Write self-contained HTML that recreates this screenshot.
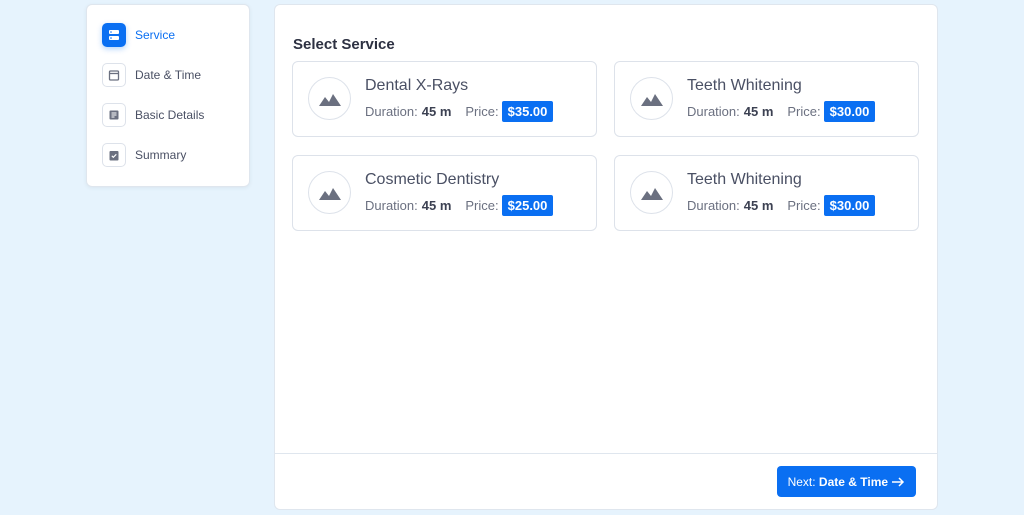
<!DOCTYPE html>
<html><head><style>
*{box-sizing:border-box;margin:0;padding:0}
body{width:1024px;height:515px;background:#e6f3fd;font-family:"Liberation Sans",sans-serif;position:relative;overflow:hidden;color:#4a5064}
.side{position:absolute;left:86px;top:4px;width:164px;height:183px;background:#fff;border:1px solid #dfe6ee;border-radius:6px;box-shadow:0 1px 4px rgba(0,0,0,.06)}
.it{position:absolute;left:15px;display:flex;align-items:center;font-size:12px;color:#4a5064}
.ic{width:24px;height:24px;border:1px solid #dde2ea;border-radius:5px;margin-right:9px;display:flex;align-items:center;justify-content:center;background:#fff}
.ic.a{background:#0a6ff2;border-color:#0a6ff2;box-shadow:0 2px 6px rgba(10,111,242,.3)}
.main{position:absolute;left:274px;top:4px;width:664px;height:506px;background:#fff;border:1px solid #dfe6ee;border-radius:6px}
h2{position:absolute;left:18px;top:31px;font-size:15px;font-weight:bold;color:#2d3142}
.card{position:absolute;width:305px;height:76px;border:1px solid #dde2ea;border-radius:6px}
.circ{position:absolute;left:15px;top:15px;width:43px;height:43px;border:1px solid #dde2ea;border-radius:50%;display:flex;align-items:center;justify-content:center}
.t{position:absolute;left:72px;top:15px;font-size:16px;color:#4a5064}
.d{position:absolute;left:72px;top:39px;font-size:13px;color:#6b7080;display:flex;align-items:center;white-space:nowrap}
.d b{color:#3c4152;margin-left:4px;margin-right:14px}
.p{background:#0a6ff2;color:#fff;font-weight:bold;padding:3px 6px;border-radius:2px;margin-left:3px}
.foot{position:absolute;left:0;top:448px;width:662px;border-top:1px solid #dfe6ee}
.btn{position:absolute;left:502px;top:461px;width:139px;height:31px;background:#0a6ff2;border-radius:4px;color:#fff;font-size:12px;display:flex;align-items:center;justify-content:center}
</style></head><body>
<div class="side">
<div class="it" style="top:18px;color:#0a6ff2"><div class="ic a"><svg width="12" height="12" viewBox="0 0 12 12"><rect x="1" y="1" width="10" height="4" rx="1" fill="#fff"/><rect x="1" y="7" width="10" height="4" rx="1" fill="#fff"/><circle cx="3" cy="3" r=".8" fill="#0a6ff2"/><circle cx="3" cy="9" r=".8" fill="#0a6ff2"/></svg></div>Service</div>
<div class="it" style="top:58px"><div class="ic"><svg width="12" height="12" viewBox="0 0 12 12"><rect x="1.5" y="2" width="9" height="9" rx="1" fill="none" stroke="#6b7080" stroke-width="1.3"/><line x1="1.5" y1="4.5" x2="10.5" y2="4.5" stroke="#6b7080" stroke-width="1.3"/></svg></div>Date &amp; Time</div>
<div class="it" style="top:98px"><div class="ic"><svg width="12" height="12" viewBox="0 0 12 12"><rect x="1.5" y="1.5" width="9" height="9" rx="1" fill="#6b7080"/><path d="M3.5 4h5M3.5 6h5M3.5 8h3" stroke="#fff" stroke-width="1"/></svg></div>Basic Details</div>
<div class="it" style="top:138px"><div class="ic"><svg width="12" height="12" viewBox="0 0 12 12"><rect x="1.5" y="2" width="9" height="9.5" rx="1" fill="#6b7080"/><path d="M3.8 6.8l1.5 1.5 3-3" stroke="#fff" stroke-width="1.1" fill="none"/></svg></div>Summary</div>
</div>
<div class="main">
<h2>Select Service</h2>
<div class="card" style="left:17px;top:56px"><div class="circ"><svg width="22" height="14" viewBox="0 0 22 14"><path d="M0 14L6 5l4 5 4-8 8 12z" fill="#6b7080"/></svg></div><div class="t">Dental X-Rays</div><div class="d">Duration:<b>45 m</b>Price:<span class="p">$35.00</span></div></div>
<div class="card" style="left:339px;top:56px"><div class="circ"><svg width="22" height="14" viewBox="0 0 22 14"><path d="M0 14L6 5l4 5 4-8 8 12z" fill="#6b7080"/></svg></div><div class="t">Teeth Whitening</div><div class="d">Duration:<b>45 m</b>Price:<span class="p">$30.00</span></div></div>
<div class="card" style="left:17px;top:150px"><div class="circ"><svg width="22" height="14" viewBox="0 0 22 14"><path d="M0 14L6 5l4 5 4-8 8 12z" fill="#6b7080"/></svg></div><div class="t">Cosmetic Dentistry</div><div class="d">Duration:<b>45 m</b>Price:<span class="p">$25.00</span></div></div>
<div class="card" style="left:339px;top:150px"><div class="circ"><svg width="22" height="14" viewBox="0 0 22 14"><path d="M0 14L6 5l4 5 4-8 8 12z" fill="#6b7080"/></svg></div><div class="t">Teeth Whitening</div><div class="d">Duration:<b>45 m</b>Price:<span class="p">$30.00</span></div></div>
<div class="foot"></div>
<div class="btn">Next:&nbsp;<b>Date &amp; Time</b>&nbsp;<svg width="14" height="10" viewBox="0 0 14 10"><path d="M1 5h11M8 1l4 4-4 4" stroke="#fff" stroke-width="1.5" fill="none"/></svg></div>
</div>
</body></html>
